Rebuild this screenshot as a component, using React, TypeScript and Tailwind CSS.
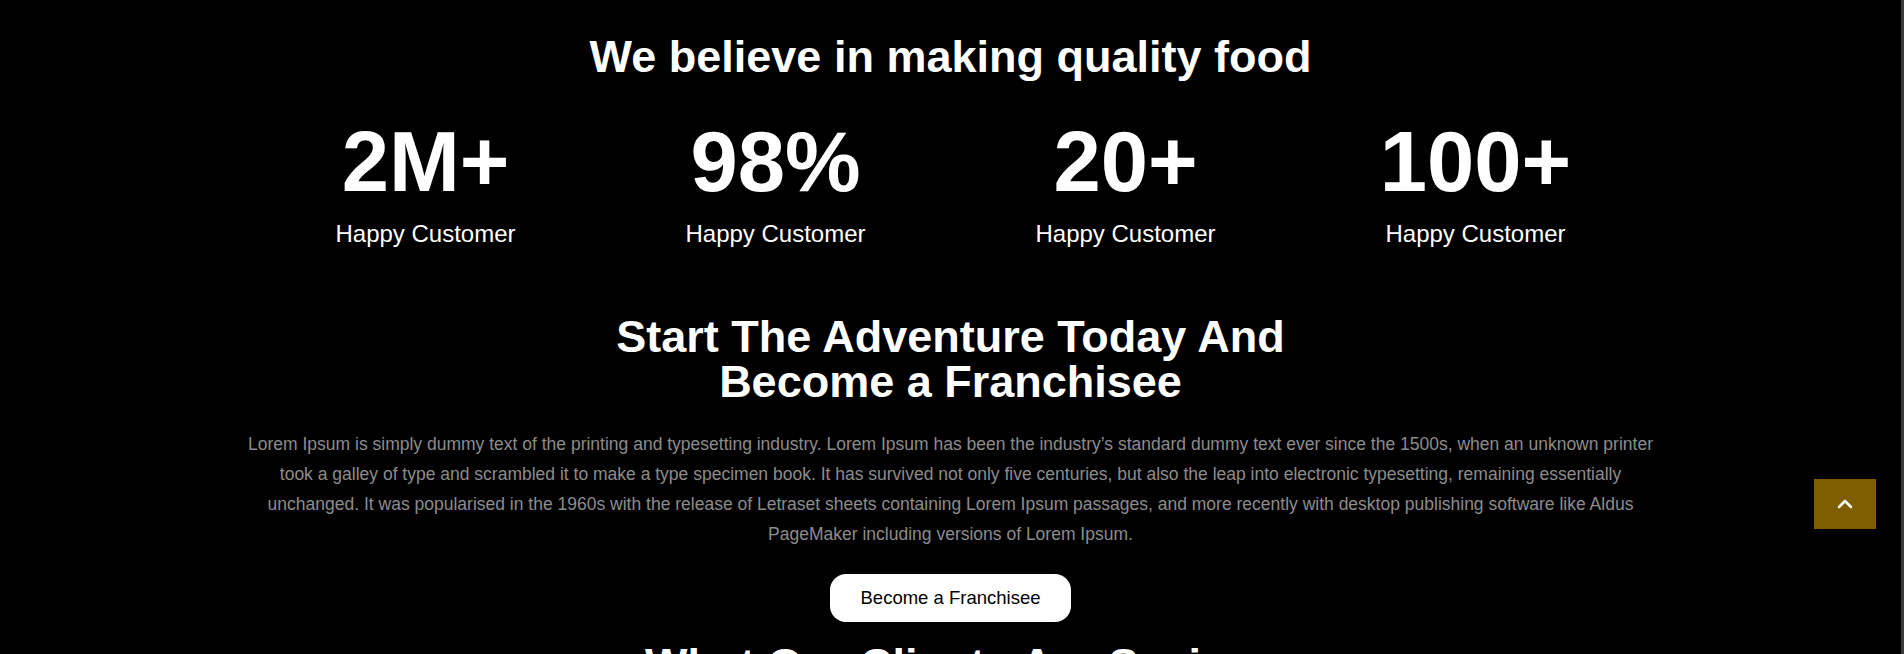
import { ChevronUp } from 'lucide-react';

const stats = [
  { value: '2M+', label: 'Happy Customer' },
  { value: '98%', label: 'Happy Customer' },
  { value: '20+', label: 'Happy Customer' },
  { value: '100+', label: 'Happy Customer' },
];

const intro =
  'Lorem Ipsum is simply dummy text of the printing and typesetting industry. Lorem Ipsum has been the industry\u2019s standard dummy text ever since the 1500s, when an unknown printer took a galley of type and scrambled it to make a type specimen book. It has survived not only five centuries, but also the leap into electronic typesetting, remaining essentially unchanged. It was popularised in the 1960s with the release of Letraset sheets containing Lorem Ipsum passages, and more recently with desktop publishing software like Aldus PageMaker including versions of Lorem Ipsum.';

export default function App() {
  return (
    <div className="flex h-[654px] overflow-hidden bg-black font-['Liberation_Sans',Arial,sans-serif] text-white">
      <main className="flex-1 text-center">
        {/* Stats */}
        <section className="pt-[30px]">
          <h1 className="text-[45px] font-bold leading-[1.2]">We believe in making quality food</h1>
          <div className="mx-auto mt-[27px] grid max-w-[1400px] grid-cols-4">
            {stats.map((s, i) => (
              <div key={i} className="flex flex-col items-center">
                <span className="text-[85px] font-bold leading-[1.2]">{s.value}</span>
                <span className="mt-[3px] text-[24px] leading-[36px]">{s.label}</span>
              </div>
            ))}
          </div>
        </section>

        {/* Franchise */}
        <section className="mt-[62px]">
          <h2 className="mx-auto max-w-[720px] text-[45px] font-bold leading-[45px]">
            Start The Adventure Today And Become a Franchisee
          </h2>
          <p className="mx-auto mt-[25px] max-w-[1416px] text-[17.5px] leading-[30px] text-[#8c8c8c]">{intro}</p>
          <button className="mt-[25px] h-[48px] rounded-2xl bg-white px-[31px] text-[18.5px] text-black">
            Become a Franchisee
          </button>
        </section>

        {/* Testimonials (cut off by the viewport) */}
        <section className="mt-[16px]">
          <h2 className="text-[45px] font-bold leading-[1.2]">What Our Clients Are Saying</h2>
        </section>
      </main>

      {/* thin scrollbar track */}
      <div className="w-[3px] bg-[#3a3a3a]" />

      <button className="fixed right-[28px] top-[479px] flex h-[50px] w-[62px] items-center justify-center bg-[#7f5e00]">
        <ChevronUp className="h-6 w-6 text-white" strokeWidth={2.5} />
      </button>
    </div>
  );
}
